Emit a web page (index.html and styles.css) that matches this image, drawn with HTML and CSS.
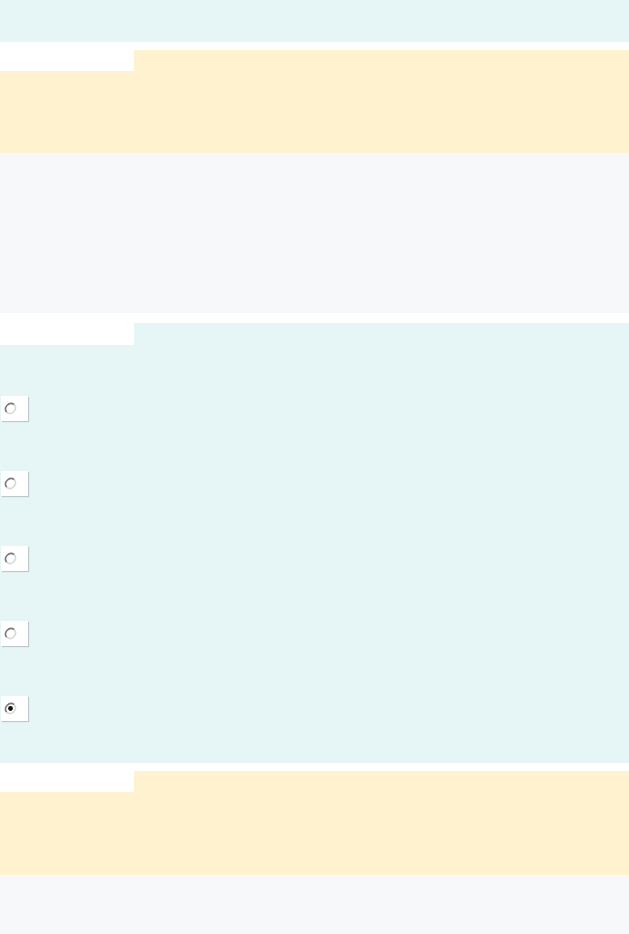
FILE: index.html
```html
<!DOCTYPE html>
<html lang="en">
<head>
  <meta charset="UTF-8">
  <meta name="viewport" content="width=device-width, initial-scale=1.0">
  <title>Form</title>
  <link rel="stylesheet" href="styles.css">
</head>
<body>
  <div class="page">
    <div class="banner"></div>

    <!-- first group -->
    <section class="group group-short">
      <div class="panel panel-yellow">
        <div class="tab"></div>
      </div>
    </section>
    <div class="notes notes-tall"></div>

    <!-- choices -->
    <section class="group group-wide">
      <div class="panel panel-cyan">
        <div class="tab tab-tall"></div>
        <ul class="choices">
          <li class="choice"><span class="radio-box"><svg class="radio" viewBox="0 0 12 12"><path d="M9.5 2.5A5 5 0 0 0 2.5 9.5" stroke="#7a7a7a" stroke-width="1.5" fill="none"/><path d="M2.5 9.5A5 5 0 0 0 9.5 2.5" stroke="#d8d8d8" stroke-width="1.5" fill="none"/></svg></span></li>
          <li class="choice"><span class="radio-box"><svg class="radio" viewBox="0 0 12 12"><path d="M9.5 2.5A5 5 0 0 0 2.5 9.5" stroke="#7a7a7a" stroke-width="1.5" fill="none"/><path d="M2.5 9.5A5 5 0 0 0 9.5 2.5" stroke="#d8d8d8" stroke-width="1.5" fill="none"/></svg></span></li>
          <li class="choice"><span class="radio-box"><svg class="radio" viewBox="0 0 12 12"><path d="M9.5 2.5A5 5 0 0 0 2.5 9.5" stroke="#7a7a7a" stroke-width="1.5" fill="none"/><path d="M2.5 9.5A5 5 0 0 0 9.5 2.5" stroke="#d8d8d8" stroke-width="1.5" fill="none"/></svg></span></li>
          <li class="choice"><span class="radio-box"><svg class="radio" viewBox="0 0 12 12"><path d="M9.5 2.5A5 5 0 0 0 2.5 9.5" stroke="#7a7a7a" stroke-width="1.5" fill="none"/><path d="M2.5 9.5A5 5 0 0 0 9.5 2.5" stroke="#d8d8d8" stroke-width="1.5" fill="none"/></svg></span></li>
          <li class="choice"><span class="radio-box"><svg class="radio" viewBox="0 0 12 12"><path d="M9.5 2.5A5 5 0 0 0 2.5 9.5" stroke="#7a7a7a" stroke-width="1.5" fill="none"/><path d="M2.5 9.5A5 5 0 0 0 9.5 2.5" stroke="#d8d8d8" stroke-width="1.5" fill="none"/><circle cx="6" cy="6" r="2.2" fill="#111"/></svg></span></li>
        </ul>
      </div>
    </section>

    <!-- last group -->
    <section class="group group-short">
      <div class="panel panel-yellow panel-last">
        <div class="tab"></div>
      </div>
    </section>
    <div class="notes notes-end"></div>
  </div>
</body>
</html>
```

FILE: styles.css
```css
body {
  margin: 0;
  background: #ffffff;
  font-family: 'Liberation Sans', Arial, sans-serif;
}
.page {
  width: 629px;
  min-height: 934px;
  display: flex;
  flex-direction: column;
}
.banner {
  height: 42px;
  background: #e6f5f6;
}
.group {
  padding-top: 8px;
  background: #ffffff;
}
.group-wide {
  padding-top: 10px;
}
.panel {
  display: flex;
  flex-direction: column;
}
.panel-yellow {
  background: #fff2ce;
  height: 103px;
}
.panel-last {
  height: 104px;
}
.panel-cyan {
  background: #e6f5f6;
  height: 440px;
}
.tab {
  width: 134px;
  height: 29px;
  margin-top: -8px;
  background: #ffffff;
}
.tab-tall {
  height: 32px;
  margin-top: -10px;
}
.notes {
  background: #f7f8fa;
}
.notes-tall {
  height: 160px;
}
.notes-end {
  flex: 1;
}
.choices {
  list-style: none;
  margin: 0;
  padding: 51px 0 0 1px;
  display: flex;
  flex-direction: column;
  gap: 50px;
}
.choice {
  display: flex;
  align-items: center;
}
.radio-box {
  width: 27px;
  height: 25px;
  background: #ffffff;
  box-shadow: 1px 1px 1px rgba(0, 0, 0, 0.18);
  display: flex;
  align-items: center;
  padding-left: 3px;
  box-sizing: border-box;
}
.radio {
  width: 13px;
  height: 13px;
}
```
